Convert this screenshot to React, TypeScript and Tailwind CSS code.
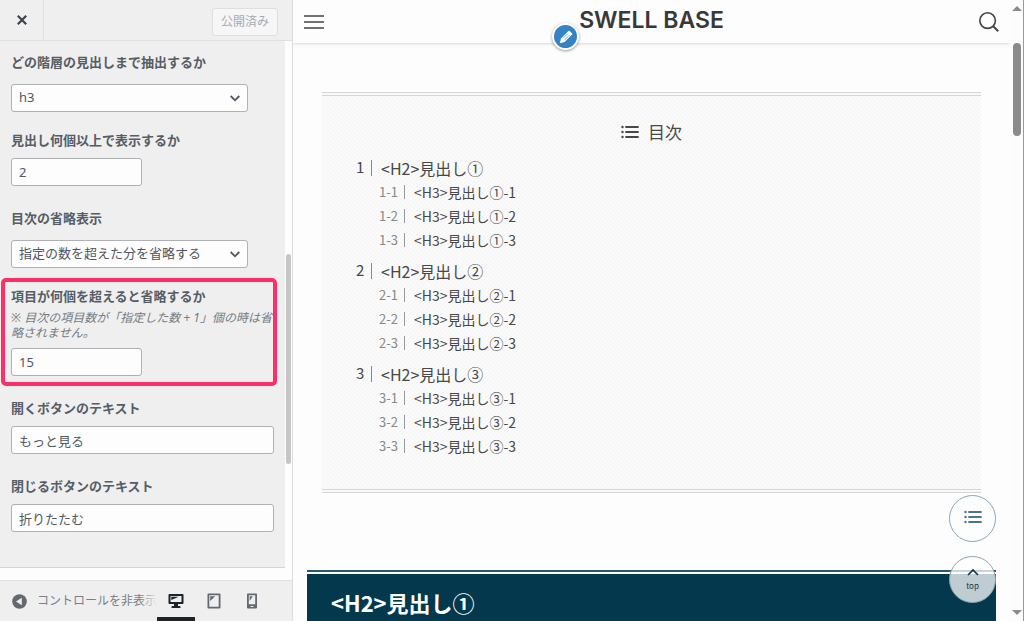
import { ReactNode, useState } from "react";

const headings = ["①", "②", "③"].map((mark, i) => ({
    no: i + 1,
    title: `<H2>見出し${mark}`,
    children: [1, 2, 3].map((n) => ({ no: `${i + 1}-${n}`, title: `<H3>見出し${mark}-${n}` })),
}));

const devices = [
    { id: "desktop", label: "デスクトップ" },
    { id: "tablet", label: "タブレット" },
    { id: "mobile", label: "モバイル" },
];

const labelClass = "block text-[13px] leading-5 font-bold text-[#555d66]";
const fieldClass =
    "block h-7 rounded-[3px] border border-[#b0b1b3] bg-[#fdfdfd] pl-[7px] text-[13px] text-[#50575e] outline-none";

function ListIcon({ className }: { className?: string }) {
    return (
        <svg viewBox="0 0 18 14" className={className} fill="none" stroke="currentColor" aria-hidden="true">
            <path d="M5 2h12M5 7h12M5 12h12" strokeWidth="1.8" strokeLinecap="round" />
            <path d="M1.5 2h.01M1.5 7h.01M1.5 12h.01" strokeWidth="2.4" strokeLinecap="round" />
        </svg>
    );
}

function DeviceIcon({ id }: { id: string }) {
    if (id === "desktop") {
        return (
            <svg viewBox="0 0 16 16" className="size-4" aria-hidden="true">
                <path
                    fill="currentColor"
                    fillRule="evenodd"
                    d="M1.4 1h13.2q.9 0 .9.9v8.2q0 .9-.9.9H10v2h1.6q.9 0 .9.9V15h-9v-1.1q0-.9.9-.9H6v-2H1.4q-.9 0-.9-.9V1.9q0-.9.9-.9zM2.5 3v6h11V3z"
                />
                <path fill="currentColor" d="M3.3 3.7h7.4L3.3 7z" />
            </svg>
        );
    }
    if (id === "tablet") {
        return (
            <svg viewBox="0 0 16 16" className="size-4" aria-hidden="true">
                <path
                    fill="currentColor"
                    fillRule="evenodd"
                    d="M2.4.5h11.2q.9 0 .9.9v13.2q0 .9-.9.9H2.4q-.9 0-.9-.9V1.4q0-.9.9-.9zM3.3 2.3v11.4h9.4V2.3z"
                />
                <path fill="currentColor" d="M4.2 3.2h5L4.2 8z" />
            </svg>
        );
    }
    return (
        <svg viewBox="0 0 16 16" className="size-4" aria-hidden="true">
            <path
                fill="currentColor"
                fillRule="evenodd"
                d="M4 .5h8q1 0 1 1v13q0 1-1 1H4q-1 0-1-1v-13q0-1 1-1zM4.8 2.3v9h6.4v-9zM6.6 12.9v1h2.8v-1z"
            />
            <path fill="currentColor" d="M5.6 3.2h3.2L5.6 8z" />
        </svg>
    );
}

function SelectField({ id, label, options }: { id: string; label: string; options: string[] }) {
    return (
        <div className="pb-[18px]">
            <label htmlFor={id} className={labelClass}>
                {label}
            </label>
            <div className="relative mt-3 w-[237px]">
                <select id={id} className={`${fieldClass} w-full appearance-none pr-6`}>
                    {options.map((option) => (
                        <option key={option}>{option}</option>
                    ))}
                </select>
                <svg
                    viewBox="0 0 10 7"
                    className="pointer-events-none absolute top-[11px] right-2 h-[7px] w-[10px]"
                    fill="none"
                    stroke="#50575e"
                    strokeWidth="1.8"
                    aria-hidden="true"
                >
                    <path d="M.7 1 5 5.3 9.3 1" />
                </svg>
            </div>
        </div>
    );
}

function InputField({
    id,
    label,
    value,
    number,
    children,
}: {
    id: string;
    label: string;
    value: string;
    number?: boolean;
    children?: ReactNode;
}) {
    return (
        <div className="pb-[22px]">
            <label htmlFor={id} className={labelClass}>
                {label}
            </label>
            {children}
            <input
                id={id}
                type={number ? "number" : "text"}
                defaultValue={value}
                className={`${fieldClass} mt-2 ${number ? "w-[131px]" : "w-full"}`}
            />
        </div>
    );
}

function Sidebar() {
    const [device, setDevice] = useState("desktop");

    return (
        <aside className="flex w-[293px] shrink-0 flex-col border-r border-[#dcdcde] bg-[#efefef] font-['Noto_Sans','Noto_Sans_CJK_JP',sans-serif]">
            <header className="flex h-[41px] shrink-0 items-stretch justify-between border-b border-[#dfdfdf]">
                <button
                    type="button"
                    aria-label="閉じる"
                    className="flex w-11 items-center justify-center border-r border-[#dfdfdf] text-[#3c434a]"
                >
                    <svg viewBox="0 0 10 10" className="size-[10px]" stroke="currentColor" strokeWidth="2.2" aria-hidden="true">
                        <path d="M.8.8l8.4 8.4M9.2.8L.8 9.2" />
                    </svg>
                </button>
                <button
                    type="button"
                    disabled
                    className="mt-2 mr-[14px] h-7 rounded-[3px] border border-[#dfdfdf] bg-[#f6f6f6] px-2 text-xs text-[#a7aaad]"
                >
                    公開済み
                </button>
            </header>

            <div className="flex min-h-0 flex-1 bg-[#fdfdfd]">
                <div className="min-w-0 flex-1 overflow-hidden">
                    <div className="border-b border-[#d5d5d5] bg-[#efefef] pt-[11px] pr-[11px] pb-[13px] pl-[11px]">
                        <SelectField id="toc-depth" label="どの階層の見出しまで抽出するか" options={["h3", "h2"]} />
                        <InputField id="toc-min" label="見出し何個以上で表示するか" value="2" number />
                        <SelectField
                            id="toc-omit"
                            label="目次の省略表示"
                            options={["指定の数を超えた分を省略する", "省略しない"]}
                        />
                        <div className="relative">
                            <InputField id="toc-omit-num" label="項目が何個を超えると省略するか" value="15" number>
                                <p className="mt-1 text-xs leading-[15px] text-[#757c84] italic">
                                    ※ 目次の項目数が「指定した数 + 1」個の時は省
                                    <br />
                                    略されません。
                                </p>
                            </InputField>
                            <div className="pointer-events-none absolute -top-2 -right-[3px] bottom-3 -left-[10px] rounded-[5px] border-4 border-[#ff2e69]" />
                        </div>
                        <InputField id="toc-open" label="開くボタンのテキスト" value="もっと見る" />
                        <InputField id="toc-close" label="閉じるボタンのテキスト" value="折りたたむ" />
                    </div>
                </div>
                <div className="w-[7px] shrink-0 pt-[213px]">
                    <div className="mx-auto h-[210px] w-[5px] rounded-full bg-[#c6c6c6]" />
                </div>
            </div>

            <footer className="flex h-[41px] shrink-0 border-t border-[#e0e0e0]">
                <button type="button" className="flex min-w-0 flex-1 items-center gap-[10px] pl-3 text-[#7a8087]">
                    <svg viewBox="0 0 15 15" className="size-[15px] shrink-0" aria-hidden="true">
                        <circle cx="7.5" cy="7.5" r="7.3" fill="#646970" />
                        <path d="M9.8 3.8v7.4L4 7.5z" fill="#efefef" />
                    </svg>
                    <span className="relative min-w-0 flex-1 overflow-hidden text-left text-xs whitespace-nowrap">
                        コントロールを非表示
                        <span className="absolute inset-y-0 right-0 w-4 bg-linear-to-r from-transparent to-[#efefef]" />
                    </span>
                </button>
                <div className="mr-[21px] flex">
                    {devices.map(({ id, label }) => (
                        <button
                            key={id}
                            type="button"
                            aria-label={label}
                            aria-pressed={device === id}
                            onClick={() => setDevice(id)}
                            className={`flex w-[38px] items-center justify-center border-b-4 pt-1 ${
                                device === id ? "border-[#1d2327] text-[#1d2327]" : "border-transparent text-[#646970]"
                            }`}
                        >
                            <DeviceIcon id={id} />
                        </button>
                    ))}
                </div>
            </footer>
        </aside>
    );
}

function Toc() {
    return (
        <nav
            aria-label="目次"
            className="mx-[15px] border-y-4 border-double border-[#d6d6d6] bg-[linear-gradient(-45deg,#fcfcfc_25%,#f6f6f6_25%,#f6f6f6_50%,#fcfcfc_50%,#fcfcfc_75%,#f6f6f6_75%)] bg-[length:4px_4px] px-[34px] pt-6 pb-[31px]"
        >
            <div className="flex items-center justify-center gap-[9px] text-[17px] leading-6">
                <ListIcon className="h-[14px] w-[18px]" />
                目次
            </div>
            <ol className="mt-[11px] flex flex-col gap-[6px]">
                {headings.map((h2) => (
                    <li key={h2.no}>
                        <a href="#h2" className="flex h-[25px] items-center text-base">
                            <span className="mr-[9px] flex h-4 w-4 items-center border-r border-[#888] text-[15px]">
                                {h2.no}
                            </span>
                            {h2.title}
                        </a>
                        <ol className="pl-[23px]">
                            {h2.children.map((h3) => (
                                <li key={h3.no}>
                                    <a href="#h2" className="flex h-6 items-center text-sm">
                                        <span className="mr-[9px] flex h-[14px] w-[26px] items-center border-r border-[#999] text-[13px] text-[#888]">
                                            {h3.no}
                                        </span>
                                        {h3.title}
                                    </a>
                                </li>
                            ))}
                        </ol>
                    </li>
                ))}
            </ol>
        </nav>
    );
}

function Preview() {
    return (
        <div className="relative flex min-w-0 flex-1 flex-col overflow-hidden bg-[#fdfdfd] font-['Noto_Sans_CJK_JP',sans-serif] text-[#484848]">
            <header className="flex h-[43px] shrink-0 items-center justify-between px-[11px] shadow-[0_1px_3px_rgba(0,0,0,0.14)]">
                <button type="button" aria-label="メニュー">
                    <svg viewBox="0 0 20 14" className="h-[14px] w-5" stroke="#444" strokeWidth="1.3" aria-hidden="true">
                        <path d="M0 1h20M0 7h20M0 13h20" />
                    </svg>
                </button>
                <div className="relative pb-[3px]">
                    <a
                        href="#top"
                        className="block font-['Inter',sans-serif] text-[23px] leading-10 font-semibold text-[#383838]"
                    >
                        SWELL BASE
                    </a>
                    <button
                        type="button"
                        aria-label="編集"
                        className="absolute top-[23px] -left-[27px] flex size-[27px] items-center justify-center rounded-full border-2 border-white bg-[#3582c4] shadow-[0_1px_3px_rgba(0,0,0,0.4)]"
                    >
                        <svg viewBox="0 0 14 14" className="size-[14px]" aria-hidden="true">
                            <path fill="#fff" d="M9.4.9q.6-.5 1.2 0l2.5 2.5q.5.6 0 1.2L5.6 12 .8 13.2 2 8.400z" />
                            <path stroke="#3582c4" strokeWidth=".7" d="M4.200 8.200l4.500-4.500M5.700 9.800l4.500-4.500" />
                        </svg>
                    </button>
                </div>
                <button type="button" aria-label="検索">
                    <svg viewBox="0 0 20 20" className="size-5" fill="none" stroke="#444" strokeWidth="1.6" aria-hidden="true">
                        <circle cx="8.6" cy="8.6" r="7.8" />
                        <path d="M14.2 14.2l5 5" strokeWidth="2" />
                    </svg>
                </button>
            </header>

            <main className="px-[14px] pt-[49px]">
                <Toc />
                <div className="mt-[77px] border-t-2 border-[#2b586a] pt-[2px]">
                    <h2 id="h2" className="bg-[#04384c] px-6 py-3 text-[22px] leading-8 font-bold text-white">
                        {"<H2>見出し①"}
                    </h2>
                </div>
            </main>

            <div className="absolute right-[14px] bottom-[18px] flex flex-col gap-[14px] text-[#04384c]">
                <button
                    type="button"
                    aria-label="目次を開く"
                    className="flex size-[47px] items-center justify-center rounded-full border border-[#8ea4b1] bg-[#fdfdfd] pb-1 text-[#4f7389]"
                >
                    <ListIcon className="h-[14px] w-[18px]" />
                </button>
                <button
                    type="button"
                    className="flex size-[47px] flex-col items-center justify-center rounded-full border border-[#8ea4b1] bg-[#fdfdfd]/75 text-[8px] leading-3"
                >
                    <svg viewBox="0 0 12 8" className="mb-1 h-2 w-3" fill="none" stroke="currentColor" strokeWidth="1.6" aria-hidden="true">
                        <path d="M1 7l5-5 5 5" />
                    </svg>
                    top
                </button>
            </div>
        </div>
    );
}

export default function App() {
    return (
        <div className="flex h-screen overflow-hidden">
            <Sidebar />
            <Preview />
            <div className="flex w-[14px] shrink-0 flex-col items-center border-r border-[#999] bg-[#fcfcfc]">
                <svg viewBox="0 0 10 5" className="mt-[6px] h-[5px] w-[10px] shrink-0" fill="#8b8b8b" aria-hidden="true">
                    <path d="M5 0l5 5H0z" />
                </svg>
                <div className="mt-8 h-[93px] w-2 shrink-0 rounded-full bg-[#8b8b8b]" />
                <svg viewBox="0 0 10 5" className="mt-auto mb-[6px] h-[5px] w-[10px] shrink-0" fill="#8b8b8b" aria-hidden="true">
                    <path d="M0 0h10L5 5z" />
                </svg>
            </div>
        </div>
    );
}
